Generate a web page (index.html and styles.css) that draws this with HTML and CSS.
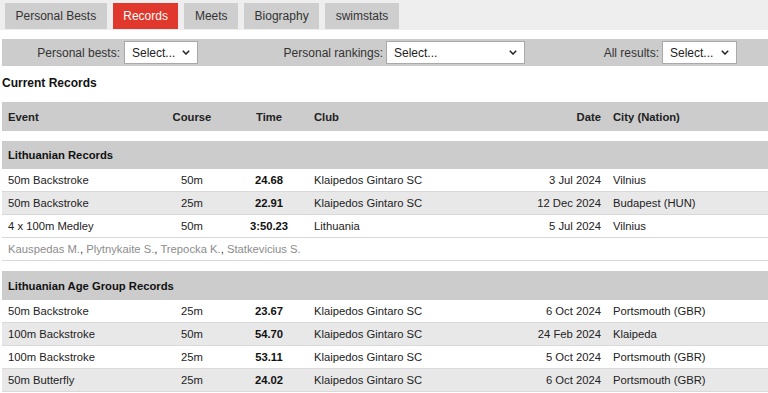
FILE: index.html
```html
<!DOCTYPE html>
<html lang="en">
<head>
<meta charset="utf-8">
<title>Records</title>
<link rel="stylesheet" href="styles.css">
</head>
<body>
<nav class="tabs">
  <a class="tab">Personal Bests</a>
  <a class="tab active">Records</a>
  <a class="tab">Meets</a>
  <a class="tab">Biography</a>
  <a class="tab">swimstats</a>
</nav>

<div class="filters">
  <div class="filter f1">
    <label>Personal bests:</label>
    <span class="select w1"><select><option>Select...</option></select><svg viewBox="0 0 8 5" width="8" height="5"><path d="M0.8 0.8 L4 4 L7.2 0.8" fill="none" stroke="#222" stroke-width="1.5"/></svg></span>
  </div>
  <div class="filter f2">
    <label>Personal rankings:</label>
    <span class="select w2"><select><option>Select...</option></select><svg viewBox="0 0 8 5" width="8" height="5"><path d="M0.8 0.8 L4 4 L7.2 0.8" fill="none" stroke="#222" stroke-width="1.5"/></svg></span>
  </div>
  <div class="filter f3">
    <label>All results:</label>
    <span class="select w3"><select><option>Select...</option></select><svg viewBox="0 0 8 5" width="8" height="5"><path d="M0.8 0.8 L4 4 L7.2 0.8" fill="none" stroke="#222" stroke-width="1.5"/></svg></span>
  </div>
</div>

<h2 class="title">Current Records</h2>

<table class="records">
  <colgroup>
    <col class="c-event"><col class="c-course"><col class="c-time"><col class="c-club"><col class="c-date"><col class="c-city">
  </colgroup>
  <thead>
    <tr class="head">
      <th class="event">Event</th><th class="center">Course</th><th class="center">Time</th><th class="club">Club</th><th class="date">Date</th><th class="city">City (Nation)</th>
    </tr>
  </thead>
  <tbody>
    <tr class="spacer"><td colspan="6"></td></tr>
    <tr class="section"><td colspan="6">Lithuanian Records</td></tr>
    <tr><td class="event">50m Backstroke</td><td class="center">50m</td><td class="center time">24.68</td><td class="club">Klaipedos Gintaro SC</td><td class="date">3 Jul 2024</td><td class="city">Vilnius</td></tr>
    <tr class="alt"><td class="event">50m Backstroke</td><td class="center">25m</td><td class="center time">22.91</td><td class="club">Klaipedos Gintaro SC</td><td class="date">12 Dec 2024</td><td class="city">Budapest (HUN)</td></tr>
    <tr><td class="event">4 x 100m Medley</td><td class="center">50m</td><td class="center time">3:50.23</td><td class="club">Lithuania</td><td class="date">5 Jul 2024</td><td class="city">Vilnius</td></tr>
    <tr class="names"><td colspan="6"><span class="swimmer">Kauspedas M.</span>, <span class="swimmer">Plytnykaite S.</span>, <span class="swimmer">Trepocka K.</span>, <span class="swimmer">Statkevicius S.</span></td></tr>
    <tr class="spacer"><td colspan="6"></td></tr>
    <tr class="section section-tall"><td colspan="6">Lithuanian Age Group Records</td></tr>
    <tr><td class="event">50m Backstroke</td><td class="center">25m</td><td class="center time">23.67</td><td class="club">Klaipedos Gintaro SC</td><td class="date">6 Oct 2024</td><td class="city">Portsmouth (GBR)</td></tr>
    <tr class="alt"><td class="event">100m Backstroke</td><td class="center">50m</td><td class="center time">54.70</td><td class="club">Klaipedos Gintaro SC</td><td class="date">24 Feb 2024</td><td class="city">Klaipeda</td></tr>
    <tr><td class="event">100m Backstroke</td><td class="center">25m</td><td class="center time">53.11</td><td class="club">Klaipedos Gintaro SC</td><td class="date">5 Oct 2024</td><td class="city">Portsmouth (GBR)</td></tr>
    <tr class="alt"><td class="event">50m Butterfly</td><td class="center">25m</td><td class="center time">24.02</td><td class="club">Klaipedos Gintaro SC</td><td class="date">6 Oct 2024</td><td class="city">Portsmouth (GBR)</td></tr>
  </tbody>
</table>
</body>
</html>
```

FILE: styles.css
```css
* { box-sizing: border-box; }

html, body {
  margin: 0;
  padding: 0;
  background: #fff;
}

body {
  font-family: "Liberation Sans", Arial, sans-serif;
  color: #222;
  font-size: 12px;
}

/* Tabs */
.tabs {
  display: flex;
  gap: 6px;
  background: #eeeeee;
  height: 30px;
  padding: 3px 0 1px 5px;
  margin-bottom: 9px;
}

.tab {
  display: flex;
  align-items: center;
  padding: 0 10.5px;
  background: #cecece;
  color: #333;
  font-size: 12px;
  text-decoration: none;
}

.tab.active {
  background: #e0382c;
  color: #fff;
}

/* Filters */
.filters {
  display: flex;
  margin-left: 2px;
  height: 27px;
  background: #cccccc;
  align-items: center;
}

.filter {
  display: flex;
  justify-content: flex-end;
  align-items: center;
  gap: 4px;
}

.f1 { width: 196px; }
.f2 { width: 327px; gap: 3px; }
.f3 { width: 212px; gap: 3px; }

.filter label {
  color: #333;
  font-size: 12px;
}

.select {
  position: relative;
  display: block;
  height: 23px;
}

.select select {
  appearance: none;
  -webkit-appearance: none;
  width: 100%;
  height: 100%;
  margin: 0;
  border: 1px solid #a9a9a9;
  border-radius: 0;
  background: #fff;
  color: #222;
  font-family: "Liberation Sans", Arial, sans-serif;
  font-size: 12px;
  padding: 0 0 0 7px;
}

.select svg {
  position: absolute;
  right: 8px;
  top: 9px;
  pointer-events: none;
}

.w1 { width: 74px; }
.w2 { width: 139px; }
.w3 { width: 75px; }

/* Title */
.title {
  margin: 10px 0 12px 2px;
  font-size: 12px;
  line-height: 14px;
  font-weight: bold;
  color: #111;
}

/* Table */
.records {
  margin-left: 2px;
  width: 766px;
  table-layout: fixed;
  border-collapse: separate;
  border-spacing: 0;
  font-size: 11.25px;
  color: #222;
}

.c-event { width: 158px; }
.c-course { width: 64px; }
.c-time { width: 90px; }
.c-club { width: 193px; }
.c-date { width: 100px; }
.c-city { width: 161px; }

.records th,
.records td {
  padding: 0;
  vertical-align: middle;
  white-space: nowrap;
}

.records .event { padding-left: 6px; text-align: left; }
.records .center { text-align: center; }
.records .club { text-align: left; }
.records .date { text-align: right; padding-right: 6px; }
.records .city { text-align: left; padding-left: 6px; }

.head th {
  background: #cccccc;
  height: 29px;
  font-weight: bold;
  color: #222;
}

.spacer td {
  height: 10px;
}

.section td {
  background: #cccccc;
  height: 28px;
  padding-left: 6px;
  font-weight: bold;
  color: #111;
}

.section-tall td {
  height: 29px;
}

tbody tr:not(.spacer):not(.section) td {
  height: 23px;
  border-bottom: 1px solid #d9d9d9;
}

tbody tr.names td {
  height: 24px;
}

tbody tr.alt td {
  background: #e8e8e8;
}

.time {
  font-weight: bold;
  color: #111;
}

.names td {
  padding-left: 6px;
  color: #333;
}

.swimmer {
  color: #8c8c8c;
}
```
